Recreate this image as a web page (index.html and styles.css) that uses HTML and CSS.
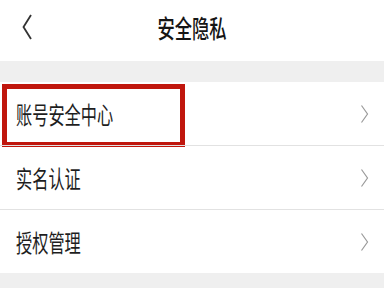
FILE: index.html
```html
<!DOCTYPE html>
<html lang="zh-CN">
<head>
<meta charset="utf-8">
<link rel="stylesheet" href="styles.css">
</head>
<body>
<div class="page">
  <header class="nav">
    <svg class="back" width="14" height="28" viewBox="0 0 14 28"><polyline points="9,2 1.5,14 9,26" fill="none" stroke="#333" stroke-width="1.8"/></svg>
    <h1 class="title"><span class="squish">安全隐私</span></h1>
  </header>
  <div class="gap"></div>
  <ul class="list">
    <li class="row highlighted">
      <span class="label">账号安全中心</span>
      <svg class="chev" width="10" height="20" viewBox="0 0 10 20"><polyline points="1.5,1.5 7.5,10 1.5,18.5" fill="none" stroke="#9a9a9a" stroke-width="1.2"/></svg>
      <div class="mark"></div>
    </li>
    <li class="row">
      <span class="label">实名认证</span>
      <svg class="chev" width="10" height="20" viewBox="0 0 10 20"><polyline points="1.5,1.5 7.5,10 1.5,18.5" fill="none" stroke="#9a9a9a" stroke-width="1.2"/></svg>
    </li>
    <li class="row">
      <span class="label">授权管理</span>
      <svg class="chev" width="10" height="20" viewBox="0 0 10 20"><polyline points="1.5,1.5 7.5,10 1.5,18.5" fill="none" stroke="#9a9a9a" stroke-width="1.2"/></svg>
    </li>
  </ul>
</div>
</body>
</html>
```
FILE: styles.css
```css
* { box-sizing: border-box; }
html, body {
  margin: 0;
  padding: 0;
  background: #efefef;
  font-family: "Noto Sans CJK SC", "Noto Sans", sans-serif;
}
.page {
  width: 384px;
  height: 288px;
  overflow: hidden;
  background: #efefef;
}
.nav {
  position: relative;
  height: 61px;
  background: #fff;
  display: flex;
  align-items: center;
  justify-content: center;
}
.back {
  position: absolute;
  left: 22px;
  top: 13px;
}
.title {
  margin: 0;
  margin-top: -8px;
  font-size: 25px;
  font-weight: 500;
  color: #151515;
  line-height: 30px;
}
.squish {
  display: inline-block;
  transform: scaleX(0.69);
  transform-origin: center center;
}
.gap {
  height: 21px;
}
.list {
  list-style: none;
  margin: 0;
  padding: 0;
  background: #fff;
}
.row {
  position: relative;
  height: 63px;
  display: flex;
  align-items: center;
  padding-left: 16px;
  padding-right: 14px;
}
.row + .row {
  height: 64px;
  border-top: 1px solid #e2e2e2;
}
.label {
  display: inline-block;
  font-size: 24px;
  line-height: 30px;
  color: #1e1e1e;
  transform: scaleX(0.675);
  transform-origin: left center;
  white-space: nowrap;
}
.chev {
  margin-left: auto;
}
.mark {
  position: absolute;
  left: 2px;
  top: 2px;
  width: 183px;
  height: 63px;
  border: 5px solid #c0160d;
}
```
